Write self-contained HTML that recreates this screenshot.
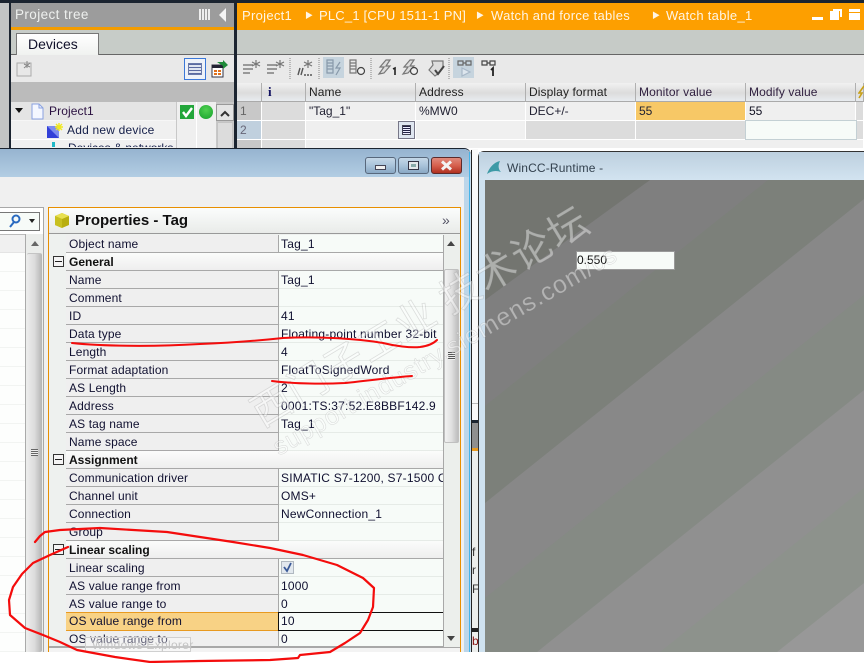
<!DOCTYPE html>
<html><head><meta charset="utf-8"><style>
html,body{margin:0;padding:0;background:#fff}
#p{position:relative;width:864px;height:663px;overflow:hidden;background:#fff;font:12px "Liberation Sans","Noto Sans CJK SC",sans-serif;color:#101030}
#p div{position:absolute;box-sizing:border-box;white-space:nowrap}
.l{left:66px;width:213px;height:18px;background:#efefef;border-bottom:1px solid #a8a8a8;padding:2px 0 0 3px;line-height:15px;letter-spacing:.12px;border-right:1px solid #a8a8a8}
.v{left:279px;width:164px;height:18px;background:#f7fbf8;border-bottom:1px solid #e6ebe7;padding:2px 0 0 2px;line-height:15px;letter-spacing:.2px;overflow:hidden}
.g{left:66px;width:377px;height:18px;background:linear-gradient(#fbfcfb,#eeeeee);border-bottom:1px solid #a8a8a8;padding:2px 0 0 3px;line-height:15px;font-weight:bold;color:#111}
.m{left:53px;width:11px;height:11px;border:1px solid #333;background:#f4f4f4}
.m:after{content:"";position:absolute;left:1px;top:4px;width:7px;height:1px;background:#222}
.h{top:83px;height:19px;background:linear-gradient(#f1f1f1,#dcdcdc 55%,#e8ecf0);border-right:1px solid #b0b0b0;border-bottom:1px solid #aaa;padding:1px 0 0 3px;line-height:16px;color:#222;letter-spacing:.1px}
.c{height:19px;border-right:1px solid #fff;border-bottom:1px solid #fff;background:#efefef;padding:1px 0 0 3px;line-height:16px}
.d{background:#dcdcdc}
</style></head><body><div id="p">

<!-- top background -->
<div style="left:0;top:0;width:864px;height:149px;background:#c8c8c8"></div>
<div style="left:0;top:0;width:864px;height:3px;background:#1b2430"></div>
<div style="left:0;top:3px;width:10px;height:146px;background:#c2c4c4"></div>
<div style="left:9px;top:0;width:2px;height:149px;background:#1b2430"></div>

<!-- project tree -->
<div style="left:11px;top:3px;width:223px;height:24px;background:#9c9c9c;color:#eef0ee;font-size:13.5px;padding:4px 0 0 4px;line-height:16px;letter-spacing:.4px">Project tree</div>
<div style="left:199px;top:9px;width:11px;height:11px;background:repeating-linear-gradient(90deg,#eee 0 2px,#999 2px 3px)"></div>
<svg style="position:absolute;left:219px;top:8px" width="8" height="14"><path d="M7 0V14L0 7Z" fill="#f4f4f4"/></svg>
<div style="left:11px;top:27px;width:223px;height:3px;background:#f39c00"></div>
<div style="left:11px;top:30px;width:223px;height:25px;background:#c7ccc8;border-bottom:1px solid #666"></div>
<div style="left:16px;top:33px;width:83px;height:22px;background:linear-gradient(#fff,#f0f2f0);border:1px solid #777;border-bottom:0;font-size:14px;color:#10102a;padding:2px 0 0 11px;line-height:17px">Devices</div>
<div style="left:11px;top:55px;width:223px;height:27px;background:#e9e9e9"></div>
<svg style="position:absolute;left:16px;top:60px" width="18" height="18"><path d="M1 3H8L15 3V16H1Z" fill="#e8e8e8" stroke="#aaa"/><path d="M11 1V8M8 4L14 7M14 3L8 8" stroke="#888" stroke-width="1"/></svg>
<div style="left:184px;top:58px;width:22px;height:22px;border:1px solid #3b78d8;background:#eef2f8"></div>
<div style="left:188px;top:63px;width:14px;height:12px;background:repeating-linear-gradient(#5a6aa0 0 1px,#dfe5f0 1px 3px);border:1px solid #6878a8"></div>
<svg style="position:absolute;left:210px;top:60px" width="18" height="18"><rect x="2" y="5" width="11" height="12" fill="#fff" stroke="#334"/><rect x="2" y="5" width="11" height="3" fill="#223"/><rect x="4" y="10" width="3" height="2" fill="#e0701a"/><rect x="8" y="10" width="3" height="2" fill="#e0701a"/><rect x="4" y="13" width="3" height="2" fill="#e0701a"/><rect x="8" y="13" width="3" height="2" fill="#e0701a"/><path d="M7 2H13V0L18 5L13 9V6" fill="#1f8a3a"/></svg>
<div style="left:11px;top:82px;width:223px;height:20px;background:#bbb"></div>
<div style="left:11px;top:102px;width:165px;height:19px;background:#e4e4e4;border-bottom:1px solid #f6f6f6"></div>
<div style="left:11px;top:121px;width:165px;height:19px;background:#f0f0f0;border-bottom:1px solid #fff"></div>
<div style="left:11px;top:140px;width:165px;height:9px;background:#f0f0f0"></div>
<div style="left:176px;top:102px;width:40px;height:47px;background:#efefef;border-left:1px solid #c8c8c8"></div>
<div style="left:196px;top:102px;width:1px;height:47px;background:#fff"></div>
<svg style="position:absolute;left:15px;top:108px" width="9" height="6"><path d="M0 0H8L4 5Z" fill="#111"/></svg>
<svg style="position:absolute;left:30px;top:103px" width="15" height="17"><path d="M2 1H9L13 5V16H2Z" fill="#f4f7ff" stroke="#8aa2e0"/><path d="M9 1V5H13" fill="none" stroke="#8aa2e0"/></svg>
<div style="left:49px;top:103px;height:17px;line-height:17px;color:#2a1040;letter-spacing:.1px">Project1</div>
<svg style="position:absolute;left:47px;top:123px" width="17" height="16"><rect x="0" y="3" width="12" height="12" fill="#3340d8"/><path d="M0 3H12V15Z" fill="#7d8cf0"/><path d="M12 0V8M8 4H16M9 1L15 7M15 1L9 7" stroke="#f0e820" stroke-width="1.4"/></svg>
<div style="left:67px;top:122px;height:17px;line-height:17px;color:#16204a;letter-spacing:.2px">Add new device</div>
<div style="left:68px;top:141px;height:6px;overflow:hidden;line-height:15px;color:#16204a">Devices &amp; networks</div>
<div style="left:52px;top:142px;width:3px;height:5px;background:#1fb8c8"></div>
<svg style="position:absolute;left:180px;top:105px" width="15" height="14"><rect width="14" height="14" fill="#22a63a"/><path d="M3 7L6 11L12 3" stroke="#fff" stroke-width="2.4" fill="none"/></svg>
<div style="left:199px;top:105px;width:14px;height:14px;border-radius:50%;background:radial-gradient(circle at 50% 35%,#50d050,#15a02c)"></div>
<div style="left:216px;top:104px;width:18px;height:17px;background:#e4e4e4;border:1px solid #999"></div>
<svg style="position:absolute;left:220px;top:110px" width="11" height="7"><path d="M1 6L5 2L9 6" stroke="#333" stroke-width="2" fill="none"/></svg>
<div style="left:217px;top:122px;width:16px;height:27px;background:#dcdcdc;border:1px solid #c4c4c4"></div>
<div style="left:234px;top:0;width:3px;height:149px;background:#1b2430"></div>

<!-- right pane -->
<div style="left:237px;top:3px;width:627px;height:27px;background:#fd9f00;color:#fff5e4;font-size:13px;line-height:16px;padding:5px 0 0 5px;letter-spacing:.3px">Project1<span style="position:absolute;left:68px;font-size:8px">▶</span><span style="position:absolute;left:82px;letter-spacing:.2px">PLC_1 [CPU 1511-1 PN]</span><span style="position:absolute;left:239px;font-size:8px">▶</span><span style="position:absolute;left:254px">Watch and force tables</span><span style="position:absolute;left:415px;font-size:8px">▶</span><span style="position:absolute;left:429px">Watch table_1</span></div>
<div style="left:812px;top:17px;width:11px;height:3px;background:#fff"></div>
<div style="left:830px;top:11px;width:9px;height:9px;background:#fff"></div>
<div style="left:833px;top:9px;width:9px;height:8px;border:2px solid #fff;border-left:0;border-bottom:0"></div>
<div style="left:849px;top:9px;width:11px;height:11px;background:#fff;border-top:2px solid #fff"></div>
<div style="left:849px;top:12px;width:11px;height:1px;background:#fd9f00"></div>
<div style="left:237px;top:30px;width:627px;height:25px;background:#c6cbc7;border-bottom:1px solid #666"></div>
<div style="left:237px;top:55px;width:627px;height:28px;background:#e9e9e9"></div>
<div style="left:323px;top:57px;width:21px;height:21px;background:#c6d4de"></div>
<div style="left:453px;top:57px;width:21px;height:21px;background:#c6d4de"></div>
<svg style="position:absolute;left:237px;top:55px" width="270" height="28" fill="none" stroke="#777" stroke-width="1.2">
<path d="M6 10H16M6 14H16M6 18H13" stroke="#999" stroke-width="2"/><path d="M19 5V13M15 7L23 11M23 7L15 11"/>
<path d="M30 10H40M30 14H40M30 18H37" stroke="#999" stroke-width="2"/><path d="M43 5V13M39 7L47 11M47 7L39 11"/>
<path d="M63 13L61 20M66 13L64 20" stroke="#555" stroke-width="1.4"/><path d="M67 20H69M70 20H72M73 20H75" stroke="#555" stroke-width="1.6"/><path d="M71 5V13M67 7L75 11M75 7L67 11"/>
<path d="M90 5H96V18H90ZM90 8H96M90 11H96M90 14H96" stroke="#8899aa"/><path d="M103 7L99 13H103L99 20" stroke="#8899aa"/>
<path d="M113 5H119V18H113ZM113 8H119M113 11H119M113 14H119"/><circle cx="124" cy="16" r="3.5" stroke="#444" fill="#eee"/>
<path d="M149 5L143 12H147L142 19L147 18L153 11H149L153 5Z" stroke="#777" fill="#ddd"/><path d="M156 14L158 13V20" stroke="#222" stroke-width="1.6"/>
<path d="M173 5L167 12H171L166 19L171 18L177 11H173L177 5Z" stroke="#777" fill="#ddd"/><circle cx="177" cy="16" r="3.5" stroke="#444" fill="#eee"/>
<path d="M195 6H206V13L202 18L198 21L192 15L196 10Z" stroke="#777" fill="#ddd"/><path d="M198 15L201 19L207 11" stroke="#444" stroke-width="2"/>
<path d="M221 6H226V10H221ZM229 6H234V10H229ZM226 8H229" stroke="#666"/><path d="M225 13L233 17L225 21Z" stroke="#a8b8c8" fill="#dde6ee"/>
<path d="M245 6H250V10H245ZM253 6H258V10H253ZM250 8H253" stroke="#444"/><path d="M254 15L256 13V21" stroke="#222" stroke-width="1.8"/>
<g stroke="#888" stroke-width="1" stroke-dasharray="1 1"><path d="M53 3V25M82 3V25M134 3V25M212 3V25"/></g>
</svg>

<!-- table header -->
<div class="h" style="left:237px;width:25px"></div>
<div class="h" style="left:262px;width:44px"><span style="position:absolute;left:6px;font:bold 13px 'Liberation Serif',serif;color:#101060;top:1px">i</span></div>
<div class="h" style="left:306px;width:110px">Name</div>
<div class="h" style="left:416px;width:110px">Address</div>
<div class="h" style="left:526px;width:110px">Display format</div>
<div class="h" style="left:636px;width:110px;color:#302040">Monitor value</div>
<div class="h" style="left:746px;width:110px;color:#302040">Modify value</div>
<div class="h" style="left:856px;width:8px"></div>
<svg style="position:absolute;left:858px;top:85px" width="6" height="14"><path d="M6 1L1 8H4L1 13" stroke="#c8a018" stroke-width="1.6" fill="none"/></svg>
<!-- rows -->
<div class="c" style="top:102px;left:237px;width:25px;background:#c8c8c8;color:#666">1</div>
<div class="c d" style="top:102px;left:262px;width:44px"></div>
<div class="c" style="top:102px;left:306px;width:110px;color:#223">"Tag_1"</div>
<div class="c" style="top:102px;left:416px;width:110px;color:#223">%MW0</div>
<div class="c" style="top:102px;left:526px;width:110px;color:#223">DEC+/-</div>
<div class="c" style="top:102px;left:636px;width:110px;background:#f7c866;color:#223">55</div>
<div class="c" style="top:102px;left:746px;width:110px;color:#112">55</div>
<div class="c d" style="top:102px;left:856px;width:8px"></div>
<div class="c" style="top:121px;left:237px;width:25px;background:#c0d0de;color:#667">2</div>
<div class="c d" style="top:121px;left:262px;width:44px"></div>
<div class="c" style="top:121px;left:306px;width:110px"></div>
<div class="c" style="top:121px;left:416px;width:110px;background:#f0f0f0"></div>
<div class="c d" style="top:121px;left:526px;width:110px"></div>
<div class="c d" style="top:121px;left:636px;width:110px"></div>
<div style="top:120px;left:745px;width:112px;height:20px;background:#f7fbf8;border:1px solid #c4d0d4"></div>
<div class="c d" style="top:121px;left:857px;width:7px"></div>
<div style="top:121px;left:398px;width:17px;height:18px;background:#dfe6f0;border:1px solid #778"></div>
<div style="top:125px;left:402px;width:9px;height:10px;background:repeating-linear-gradient(#224 0 1px,#eef 1px 2px);border:1px solid #445"></div>
<div class="c d" style="top:140px;left:237px;width:25px;height:9px;background:#c8c8c8"></div>
<div class="c d" style="top:140px;left:262px;width:44px;height:9px"></div>
<div class="c" style="top:140px;left:306px;width:558px;height:9px"></div>

<!-- left window -->
<div style="left:0;top:148px;width:471px;height:504px;background:#c9deee;border-top:1px solid #1b2430;border-top-right-radius:7px"></div>
<div style="left:0;top:149px;width:470px;height:28px;background:linear-gradient(#96b4d0,#b2cde3);border-top-right-radius:6px"></div>
<div style="left:0;top:177px;width:464px;height:475px;background:#f0f0f0"></div>
<div style="left:464px;top:177px;width:6px;height:475px;background:#bcd6ea"></div>
<div style="left:469px;top:152px;width:1px;height:500px;background:#45b4e8"></div>
<!-- caption buttons -->
<div style="left:365px;top:157px;width:31px;height:17px;border:1px solid #58687c;border-radius:3px;background:linear-gradient(#c6d8e8,#a9c3da 50%,#8aa8c4)"></div>
<div style="left:375px;top:165px;width:11px;height:5px;background:#f0f0f0;border:1px solid #445"></div>
<div style="left:398px;top:157px;width:31px;height:17px;border:1px solid #58687c;border-radius:3px;background:linear-gradient(#c6d8e8,#a9c3da 50%,#8aa8c4)"></div>
<div style="left:408px;top:161px;width:11px;height:9px;background:#e4e8ec;border:1px solid #334"></div>
<div style="left:411px;top:164px;width:5px;height:3px;background:#8aa;border:0"></div>
<div style="left:431px;top:157px;width:31px;height:17px;border:1px solid #5c2a2a;border-radius:3px;background:linear-gradient(#e08a7c,#d6604e 50%,#b03020)"></div>
<svg style="position:absolute;left:440px;top:160px" width="13" height="11"><path d="M2 1.5L11 9.5M11 1.5L2 9.5" stroke="#f2f2f2" stroke-width="3"/></svg>

<!-- left panel -->
<div style="left:0;top:207px;width:44px;height:445px;background:#fff;border:1px solid #a8a8a8;border-left:0;border-bottom:0"></div>
<div style="left:0;top:212px;width:40px;height:19px;background:#f7fbf8;border:1px solid #777;border-left:0"></div>
<svg style="position:absolute;left:8px;top:213px" width="30" height="16"><circle cx="8" cy="6" r="3.5" fill="none" stroke="#2a6ac0" stroke-width="2"/><path d="M6 9L2 14" stroke="#2a6ac0" stroke-width="2"/><path d="M21 6H27L24 10Z" fill="#222"/></svg>
<div style="left:0;top:234px;width:26px;height:19px;background:#f0f0f0;border-bottom:1px solid #e4e4e4;border-top:1px solid #bbb"></div>
<div style="left:0;top:253px;width:26px;height:399px;background:repeating-linear-gradient(#fdfefd 0 18px,#f2f4f2 18px 19px)"></div>
<div style="left:25px;top:234px;width:1px;height:418px;background:#aaa"></div>
<div style="left:26px;top:234px;width:17px;height:418px;background:#ebedeb"></div>
<div style="left:27px;top:253px;width:15px;height:399px;background:linear-gradient(90deg,#ececec,#dcdcdc 50%,#b4b4b4);border-top:1px solid #c4c4c4;border-radius:2px"></div>
<svg style="position:absolute;left:31px;top:241px" width="9" height="6"><path d="M0 5H8L4 0Z" fill="#666"/></svg>
<div style="left:31px;top:449px;width:7px;height:7px;background:repeating-linear-gradient(#666 0 1px,#eee 1px 2px)"></div>

<!-- properties panel -->
<div style="left:48px;top:207px;width:413px;height:445px;background:#eef1ef;border:1px solid #e88f00;border-bottom:0"></div>
<div style="left:49px;top:208px;width:411px;height:26px;background:linear-gradient(#fbfdfc,#e9ebe9);border-bottom:1px solid #999;font:bold 15px/25px 'Liberation Sans',sans-serif;color:#111;padding-left:26px">Properties - Tag</div>
<svg style="position:absolute;left:54px;top:212px" width="16" height="17"><path d="M8 1L15 4V13L8 16L1 13V4Z" fill="#b8ae10"/><path d="M1 4L8 7L15 4L8 1Z" fill="#e8e050"/><path d="M8 7V16L1 13V4Z" fill="#c8c020"/></svg>
<div style="left:442px;top:213px;font:14px/15px 'Liberation Sans',sans-serif;color:#556">»</div>
<div style="left:49px;top:234px;width:17px;height:418px;background:#eef1ef"></div>

<div class="l" style="top:235px">Object name</div><div class="v" style="top:235px;border-bottom-color:#a8a8a8">Tag_1</div>
<div class="g" style="top:253px">General</div><div class="m" style="top:256px"></div>
<div class="l" style="top:271px">Name</div><div class="v" style="top:271px">Tag_1</div>
<div class="l" style="top:289px">Comment</div><div class="v" style="top:289px"></div>
<div class="l" style="top:307px">ID</div><div class="v" style="top:307px">41</div>
<div class="l" style="top:325px">Data type</div><div class="v" style="top:325px">Floating-point number 32-bit</div>
<div class="l" style="top:343px">Length</div><div class="v" style="top:343px">4</div>
<div class="l" style="top:361px">Format adaptation</div><div class="v" style="top:361px">FloatToSignedWord</div>
<div class="l" style="top:379px">AS Length</div><div class="v" style="top:379px">2</div>
<div class="l" style="top:397px">Address</div><div class="v" style="top:397px">0001:TS:37:52.E8BBF142.9</div>
<div class="l" style="top:415px">AS tag name</div><div class="v" style="top:415px">Tag_1</div>
<div class="l" style="top:433px">Name space</div><div class="v" style="top:433px"></div>
<div class="g" style="top:451px">Assignment</div><div class="m" style="top:454px"></div>
<div class="l" style="top:469px">Communication driver</div><div class="v" style="top:469px">SIMATIC S7-1200, S7-1500 Connection</div>
<div class="l" style="top:487px">Channel unit</div><div class="v" style="top:487px">OMS+</div>
<div class="l" style="top:505px">Connection</div><div class="v" style="top:505px">NewConnection_1</div>
<div class="l" style="top:523px">Group</div><div class="v" style="top:523px"></div>
<div class="g" style="top:541px">Linear scaling</div><div class="m" style="top:544px"></div>
<div class="l" style="top:559px">Linear scaling</div><div class="v" style="top:559px"></div>
<div style="left:281px;top:561px;width:13px;height:13px;background:#e2e8ee;border:1px solid #b0b8c0"></div>
<svg style="position:absolute;left:283px;top:562px" width="10" height="11"><path d="M1 5L4 9L8 1" stroke="#3a5a98" stroke-width="1.8" fill="none"/></svg>
<div class="l" style="top:577px">AS value range from</div><div class="v" style="top:577px">1000</div>
<div class="l" style="top:595px">AS value range to</div><div class="v" style="top:595px">0</div>
<div class="l" style="background:#f8d285;border-top:1px solid #e89a20;border-bottom:1px solid #e89a20;height:19px;top:612px;padding-top:1px">OS value range from</div>
<div class="v" style="left:278px;width:165px;top:612px;height:19px;border-top:1px solid #111;border-bottom:1px solid #111;border-left:1px solid #111;padding:1px 0 0 2px">10</div>
<div class="l" style="top:631px;height:16px;padding-top:1px">OS value range to</div><div class="v" style="top:631px;height:16px;padding-top:1px">0</div>
<div style="left:49px;top:646px;width:411px;height:2px;background:#a8a8a8"></div>
<div style="left:49px;top:648px;width:411px;height:4px;background:#f3f3f3"></div>
<div style="left:85px;top:637px;width:106px;height:15px;border:1px solid #d0d0d0;background:rgba(255,255,255,.35);color:#c4c4c4;padding-left:6px;line-height:15px;letter-spacing:.3px">Windows Explorer</div>

<!-- properties scrollbar -->
<div style="left:443px;top:235px;width:17px;height:412px;background:#ecefec;border-left:1px solid #a8a8a8"></div>
<svg style="position:absolute;left:447px;top:241px" width="9" height="6"><path d="M0 5H8L4 0Z" fill="#444"/></svg>
<svg style="position:absolute;left:447px;top:636px" width="9" height="6"><path d="M0 0H8L4 5Z" fill="#444"/></svg>
<div style="left:444px;top:269px;width:15px;height:174px;background:linear-gradient(90deg,#f2f2f2,#e0e0e0 50%,#bdbdbd);border:1px solid #c0c0c0;border-radius:2px"></div>
<div style="left:448px;top:352px;width:7px;height:8px;background:repeating-linear-gradient(#555 0 1px,#eee 1px 2px)"></div>

<!-- gap between windows -->
<div style="left:471px;top:149px;width:7px;height:271px;background:#fafafa"></div>
<div style="left:471px;top:420px;width:7px;height:232px;background:#eceeec"></div>
<div style="left:471px;top:150px;width:1px;height:502px;background:#222"></div>
<div style="left:472px;top:403px;width:6px;height:1px;background:#bbb"></div>
<div style="left:472px;top:420px;width:6px;height:3px;background:#1b2430"></div>
<div style="left:472px;top:423px;width:6px;height:25px;background:#8f8f8f"></div>
<div style="left:472px;top:448px;width:6px;height:3px;background:#e89a20"></div>
<div style="left:472px;top:545px;height:14px;line-height:14px;width:6px;overflow:hidden;color:#333">f</div>
<div style="left:472px;top:563px;height:14px;line-height:14px;width:6px;overflow:hidden;color:#333">r</div>
<div style="left:472px;top:582px;height:14px;line-height:14px;width:6px;overflow:hidden;color:#333">F</div>
<div style="left:472px;top:628px;width:6px;height:4px;background:#222"></div>
<div style="left:472px;top:634px;height:14px;line-height:14px;width:6px;overflow:hidden;color:#811">b</div>

<!-- WinCC window -->
<div style="left:478px;top:151px;width:386px;height:501px;background:#cfe2f0;border-left:1px solid #333;border-top:1px solid #333;border-top-left-radius:6px"></div>
<div style="left:479px;top:152px;width:385px;height:28px;background:linear-gradient(#bdd0df,#d2e3f0)"></div>
<svg style="position:absolute;left:487px;top:160px" width="16" height="15"><path d="M0 14C2 8 7 2 13 1C11 5 11 9 14 12C9 10 4 11 0 14Z" fill="#3d9aa6"/></svg>
<div style="left:507px;top:160px;height:17px;line-height:17px;color:#33414e;letter-spacing:.15px">WinCC-Runtime -</div>
<svg style="position:absolute;left:485px;top:180px" width="379" height="472">
<rect width="379" height="472" fill="#989898"/>
<polygon points="0,0 379,0 379,403 292,472 0,472" fill="#8d928c"/>
<polygon points="0,0 379,0 379,308 175,472 0,472" fill="#909090"/>
<polygon points="0,0 379,0 379,210 52,472 0,472" fill="#858a84"/>
<polygon points="0,0 379,0 379,115 0,418" fill="#888888"/>
<polygon points="0,0 379,0 379,19 0,323" fill="#7c807a"/>
<polygon points="0,0 283,0 0,226" fill="#7f7f7f"/>
<polygon points="0,0 165,0 0,120" fill="#737570"/>
</svg>
<div style="left:576px;top:251px;width:99px;height:19px;background:#f7fbf8;border:1px solid #999;color:#111;line-height:15px;padding:1px 0 0 0;font-size:12px">0.550</div>

<!-- watermark -->
<svg style="position:absolute;left:0;top:0" width="864" height="663">
<text transform="translate(262,428) rotate(-31)" fill="#fff" fill-opacity=".42" stroke="#777" stroke-opacity=".22" stroke-width=".8" font-family="'Noto Sans CJK SC','WenQuanYi Zen Hei',sans-serif" font-size="40" textLength="385">西门子工业 技术论坛</text>
<text transform="translate(279,456) rotate(-30)" fill="#fff" fill-opacity=".42" stroke="#777" stroke-opacity=".22" stroke-width=".6" font-family="'Liberation Sans',sans-serif" font-size="25" textLength="392">support.industry.siemens.com/cs</text>
</svg>

<!-- white bottom -->
<div style="left:0;top:652px;width:864px;height:11px;background:#fff"></div>

<!-- red annotations -->
<svg style="position:absolute;left:0;top:0" width="864" height="663" fill="none" stroke="#f40c0c" stroke-width="2.2" stroke-linecap="round" stroke-linejoin="round">
<path d="M35 542L40 536 45 532 60 530 100 528 167 532 233 542 270 548 303 555 337 565 363 578 374 588 373 607 368 620 360 633 345 643 330 652 300 655 298 658 270 660 200 661 150 662 115 657 77 650 60 642 43 635 25 628 10 615 9 600 13 587 22 574 33 563 50 555 68 547"/>
<path d="M72 343C100 346 150 347 200 344C225 343 255 341 283 338C320 336 360 339 383 343C395 346 410 348 420 347C428 346 433 344 437 340" stroke-width="2"/>
<path d="M272 381C295 384 325 384 345 383C365 381 385 378 412 376" stroke-width="2"/>
</svg>
</div></body></html>
